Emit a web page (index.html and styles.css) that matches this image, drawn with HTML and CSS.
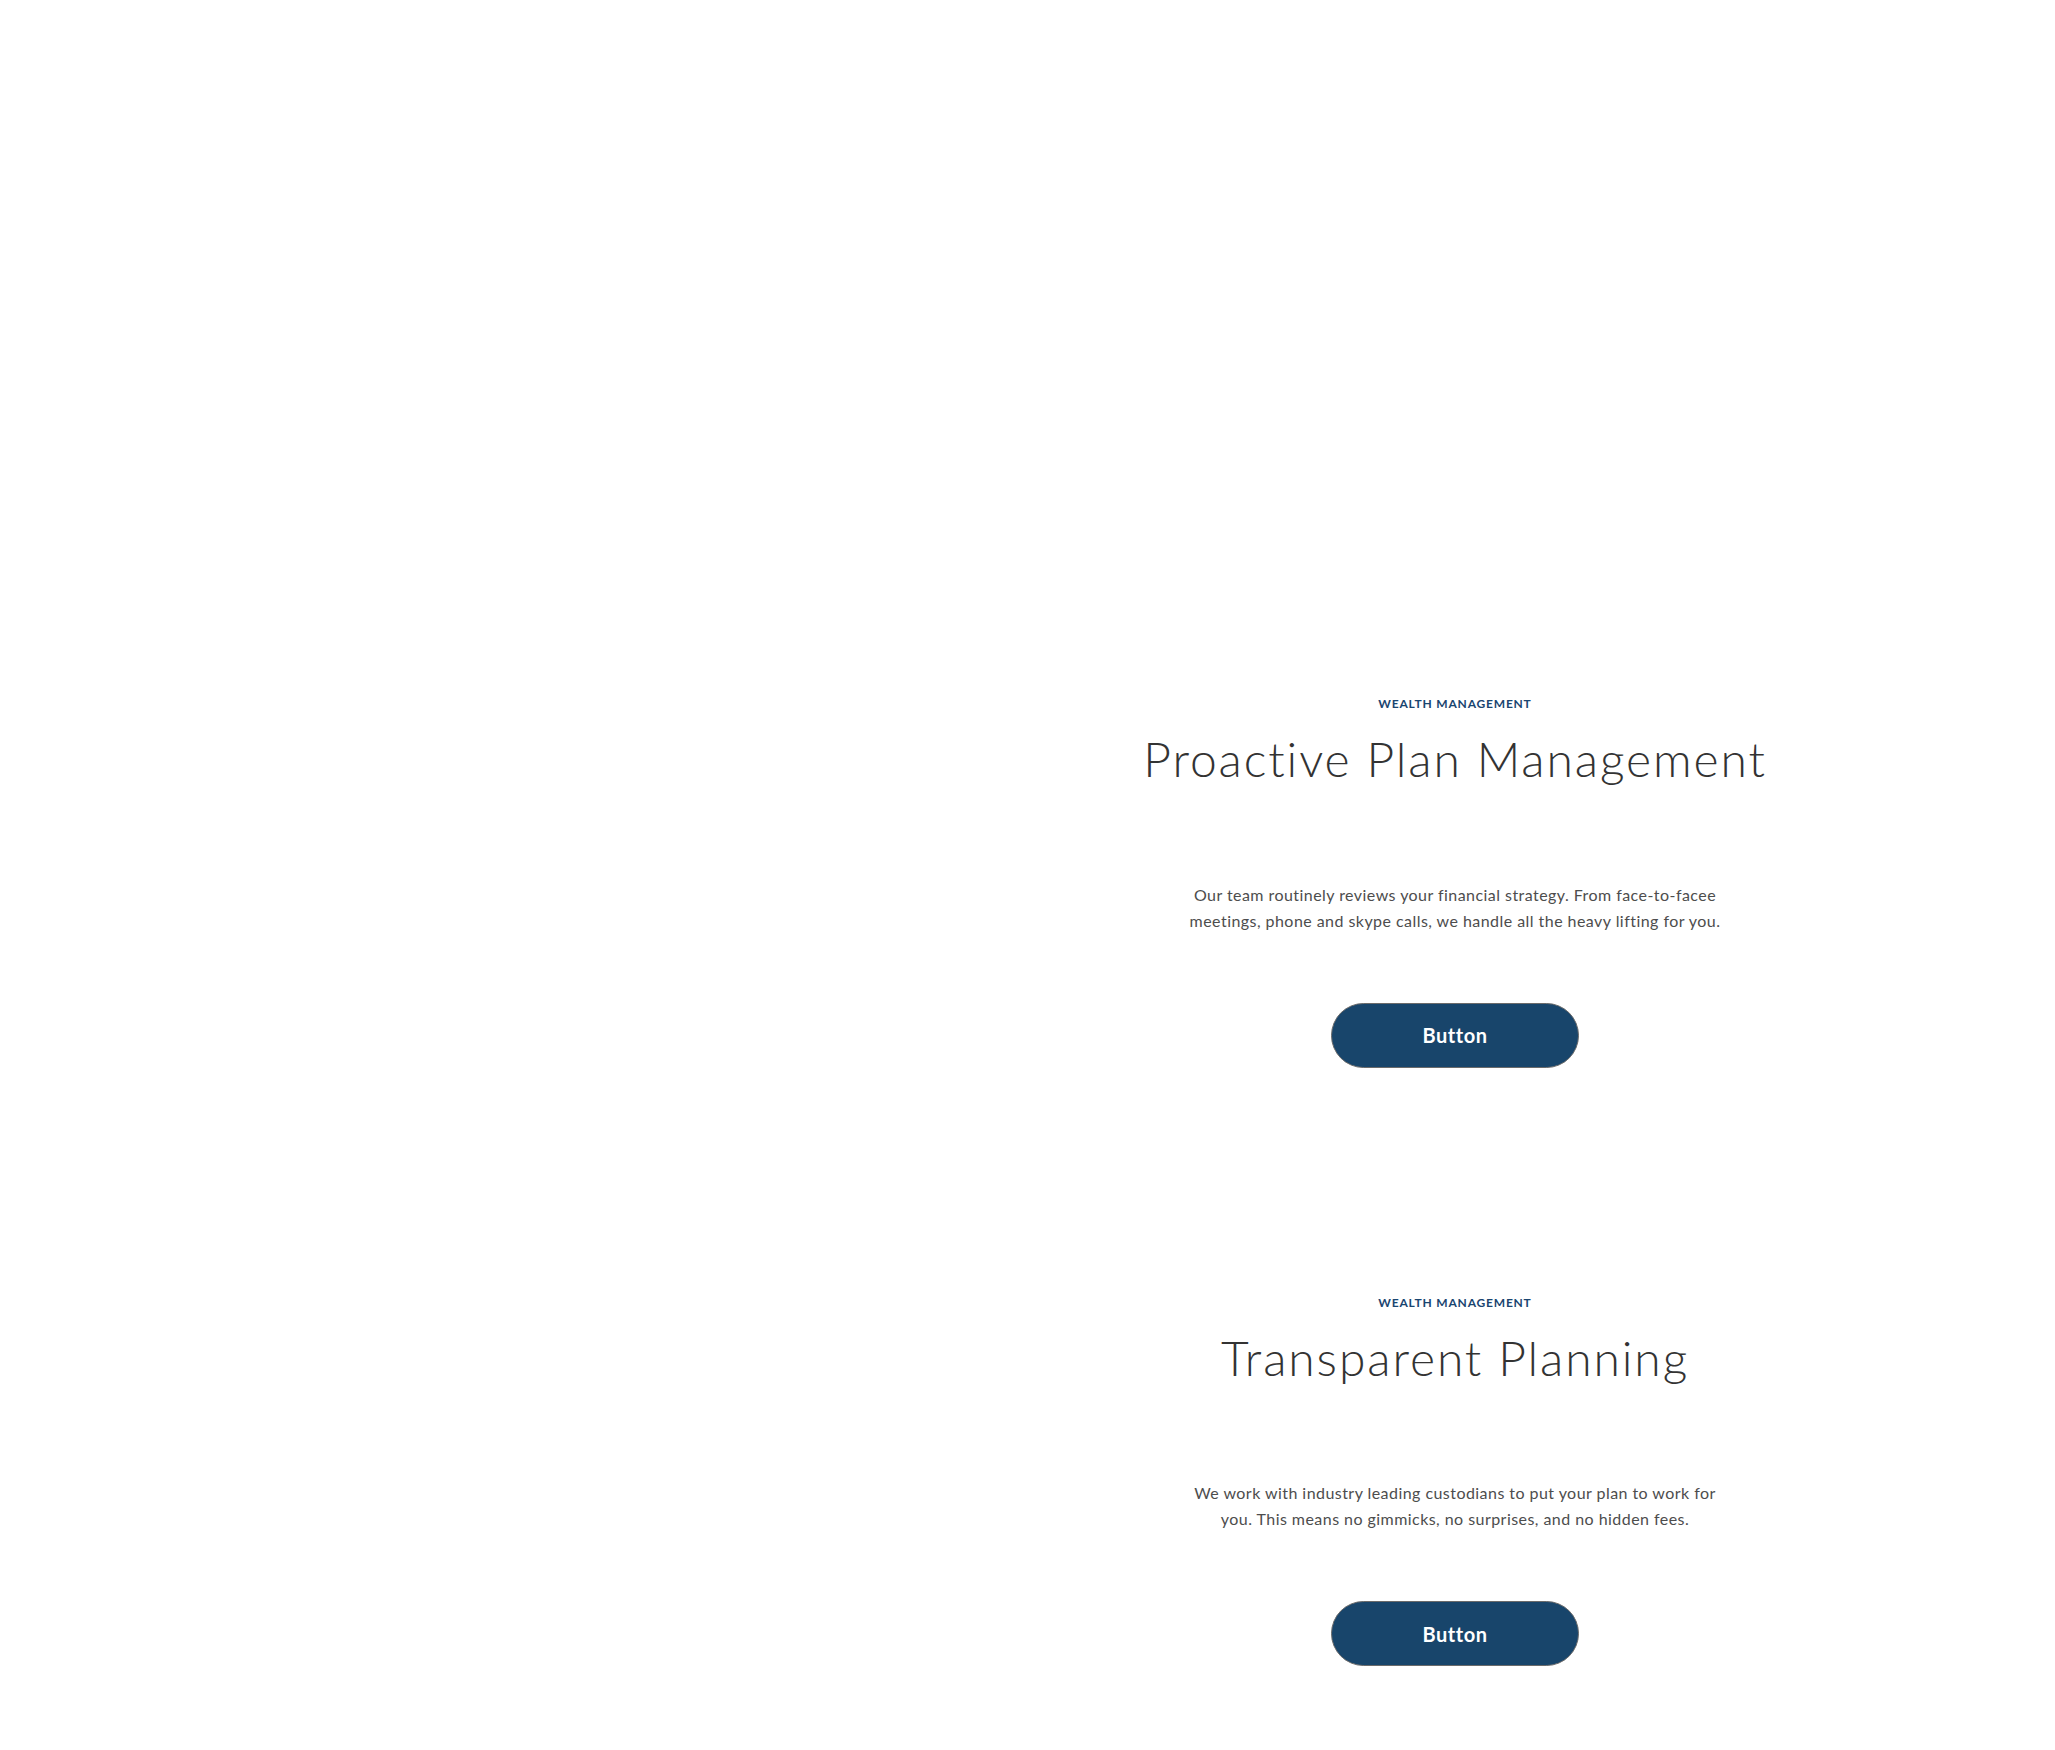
FILE: index.html
```html
<!DOCTYPE html>
<html lang="en">
<head>
<meta charset="utf-8">
<title>Wealth Management</title>
<link rel="stylesheet" href="styles.css">
</head>
<body>
<main class="page">
  <section class="feature">
    <div class="feature-media"></div>
    <div class="feature-content">
      <p class="eyebrow">WEALTH MANAGEMENT</p>
      <h2 class="title">Proactive Plan Management</h2>
      <p class="text">Our team routinely reviews your financial strategy. From face-to-facee meetings, phone and skype calls, we handle all the heavy lifting for you.</p>
      <a class="btn" href="#">Button</a>
    </div>
  </section>
  <section class="feature">
    <div class="feature-media"></div>
    <div class="feature-content">
      <p class="eyebrow">WEALTH MANAGEMENT</p>
      <h2 class="title">Transparent Planning</h2>
      <p class="text">We work with industry leading custodians to put your plan to work for you. This means no gimmicks, no surprises, and no hidden fees.</p>
      <a class="btn" href="#">Button</a>
    </div>
  </section>
</main>
</body>
</html>
```
FILE: styles.css
```css
html, body {
  margin: 0;
  padding: 0;
  background: #ffffff;
}

body {
  font-family: Lato, "Open Sans", "Liberation Sans", sans-serif;
  color: #444444;
}

.page {
  width: 1710px;
  margin: 0 auto;
  padding-top: 696px;
  display: flex;
  flex-direction: column;
  gap: 227px;
}

.feature {
  display: grid;
  grid-template-columns: 1fr 1fr;
}

.feature-content {
  display: flex;
  flex-direction: column;
  align-items: center;
  text-align: center;
}

.eyebrow {
  margin: 0;
  font-size: 12px;
  line-height: 16px;
  font-weight: 700;
  color: #1a4570;
  letter-spacing: 0.8px;
}

.title {
  margin: 18px 0 0;
  font-size: 48px;
  line-height: 1.2;
  font-weight: 300;
  color: #333333;
  letter-spacing: 1.9px;
}

.text {
  margin: 94px 0 0;
  max-width: 532px;
  font-size: 16px;
  line-height: 26px;
  font-weight: 400;
  color: #4d4d4d;
  letter-spacing: 0.45px;
}

.btn {
  margin-top: 69px;
  box-sizing: border-box;
  width: 248px;
  height: 65px;
  display: flex;
  align-items: center;
  justify-content: center;
  border-radius: 33px;
  background: #18456b;
  border: 1px solid #6b6b6b;
  color: #ffffff;
  font-size: 20px;
  font-weight: 700;
  letter-spacing: 0.5px;
  text-decoration: none;
}
```
